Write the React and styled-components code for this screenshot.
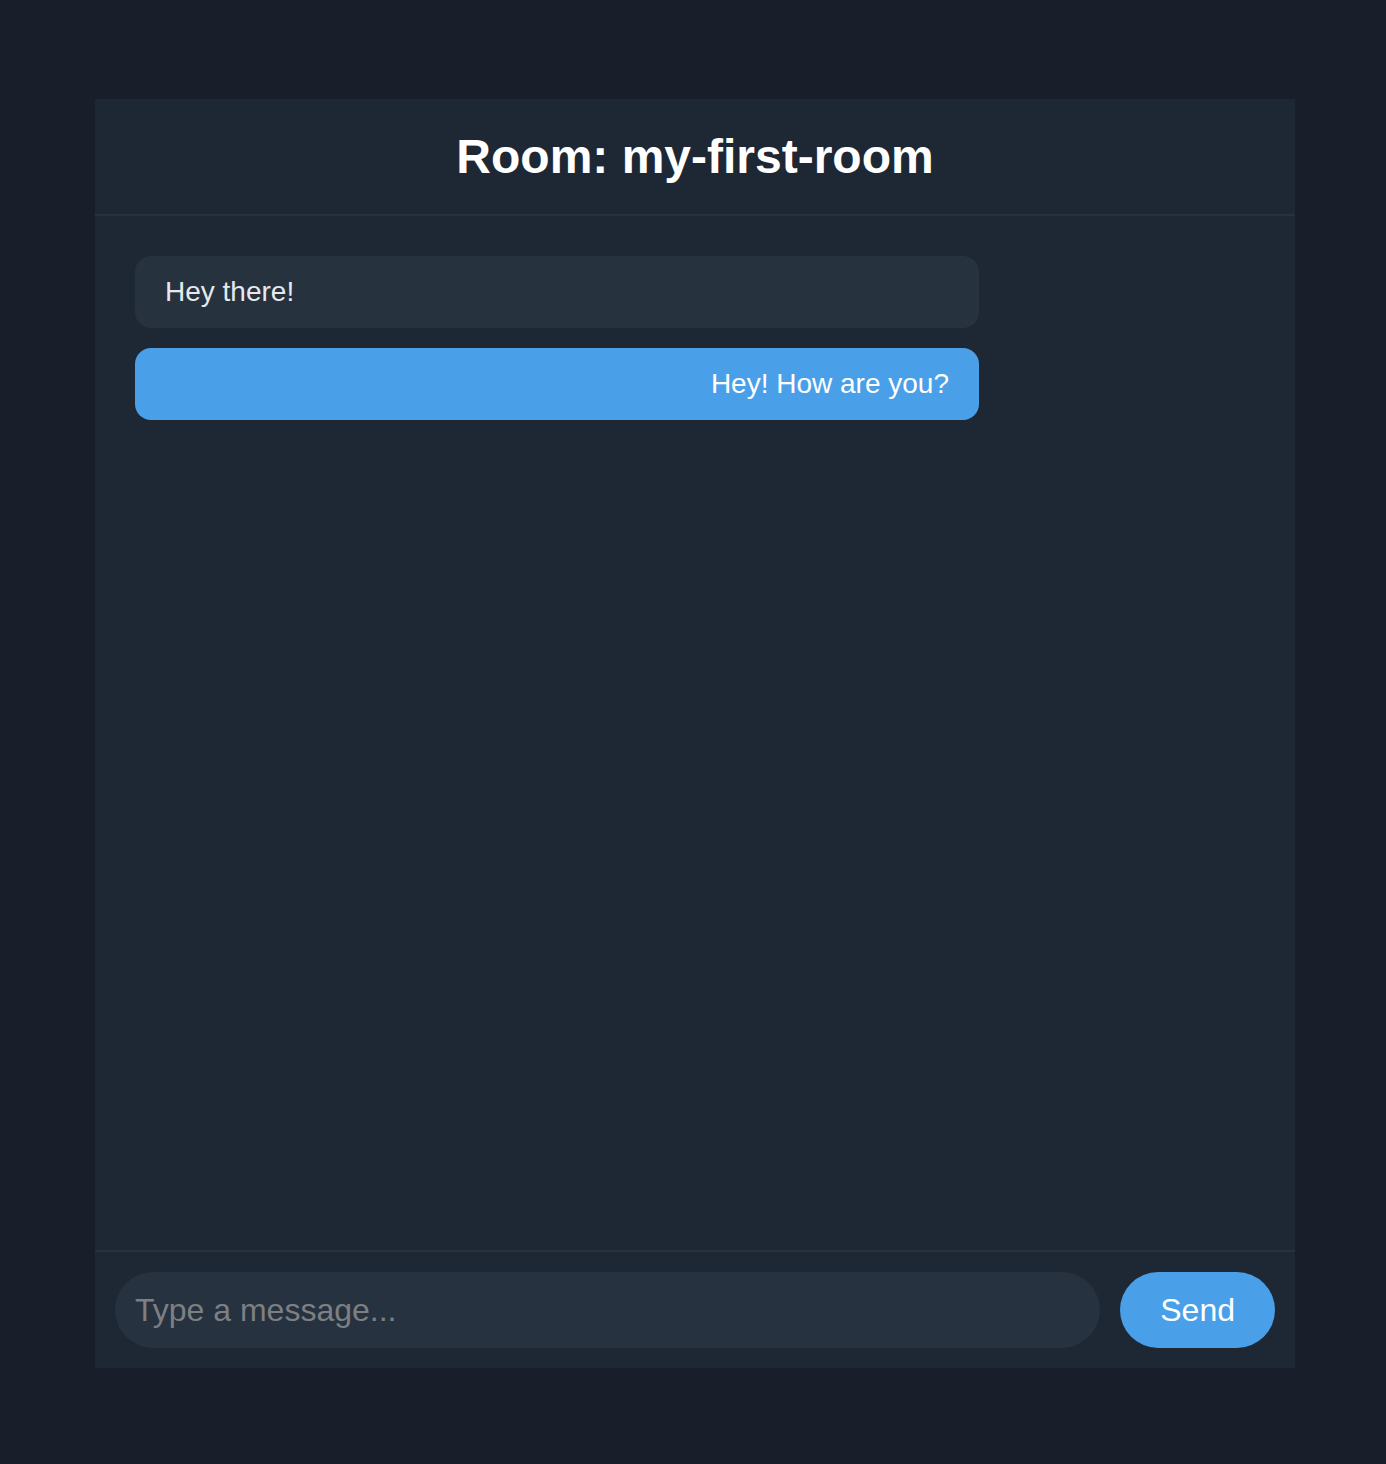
import React from 'react';
import styled, { createGlobalStyle } from 'styled-components';

const GlobalStyle = createGlobalStyle`
  * { box-sizing: border-box; }
  body {
    margin: 0;
    background: #181f2a;
    font-family: "Liberation Sans", Arial, sans-serif;
  }
`;

const Page = styled.div`
  min-height: 1464px;
  padding: 99px 91px 96px 95px;
`;

const Card = styled.div`
  width: 1200px;
  height: 1269px;
  background: #1e2734;
  display: flex;
  flex-direction: column;
`;

const Header = styled.header`
  padding: 30px;
  border-bottom: 2px solid #263240;
  text-align: center;
`;

const Title = styled.h1`
  margin: 0;
  font-size: 48px;
  font-weight: 700;
  color: #ffffff;
`;

const Messages = styled.div`
  flex: 1;
  padding: 40px;
  display: flex;
  flex-direction: column;
  gap: 20px;
`;

const Bubble = styled.div`
  width: 844px;
  padding: 20px 30px;
  border-radius: 16px;
  font-size: 28px;
  line-height: 32px;
  background: ${(p) => (p.$own ? '#4a9fe9' : '#27323f')};
  color: ${(p) => (p.$own ? '#ffffff' : '#e6e9ee')};
  text-align: ${(p) => (p.$own ? 'right' : 'left')};
`;

const Composer = styled.form`
  display: flex;
  gap: 20px;
  padding: 20px;
  border-top: 2px solid #263240;
`;

const Input = styled.input`
  flex: 1;
  height: 76px;
  padding: 0 20px;
  border: none;
  outline: none;
  border-radius: 38px;
  background: #263240;
  color: #e6e9ee;
  font-family: inherit;
  font-size: 32px;
  &::placeholder {
    color: #7d7f82;
  }
`;

const SendButton = styled.button`
  height: 76px;
  padding: 0 40px;
  border: none;
  border-radius: 38px;
  background: #4a9fe9;
  color: #ffffff;
  font-family: inherit;
  font-size: 32px;
  cursor: pointer;
`;

const messages = [
  { id: 1, text: 'Hey there!', own: false },
  { id: 2, text: 'Hey! How are you?', own: true },
];

export default function App() {
  return (
    <>
      <GlobalStyle />
      <Page>
        <Card>
          <Header>
            <Title>Room: my-first-room</Title>
          </Header>
          <Messages>
            {messages.map((m) => (
              <Bubble key={m.id} $own={m.own}>
                {m.text}
              </Bubble>
            ))}
          </Messages>
          <Composer onSubmit={(e) => e.preventDefault()}>
            <Input placeholder="Type a message..." />
            <SendButton type="submit">Send</SendButton>
          </Composer>
        </Card>
      </Page>
    </>
  );
}
